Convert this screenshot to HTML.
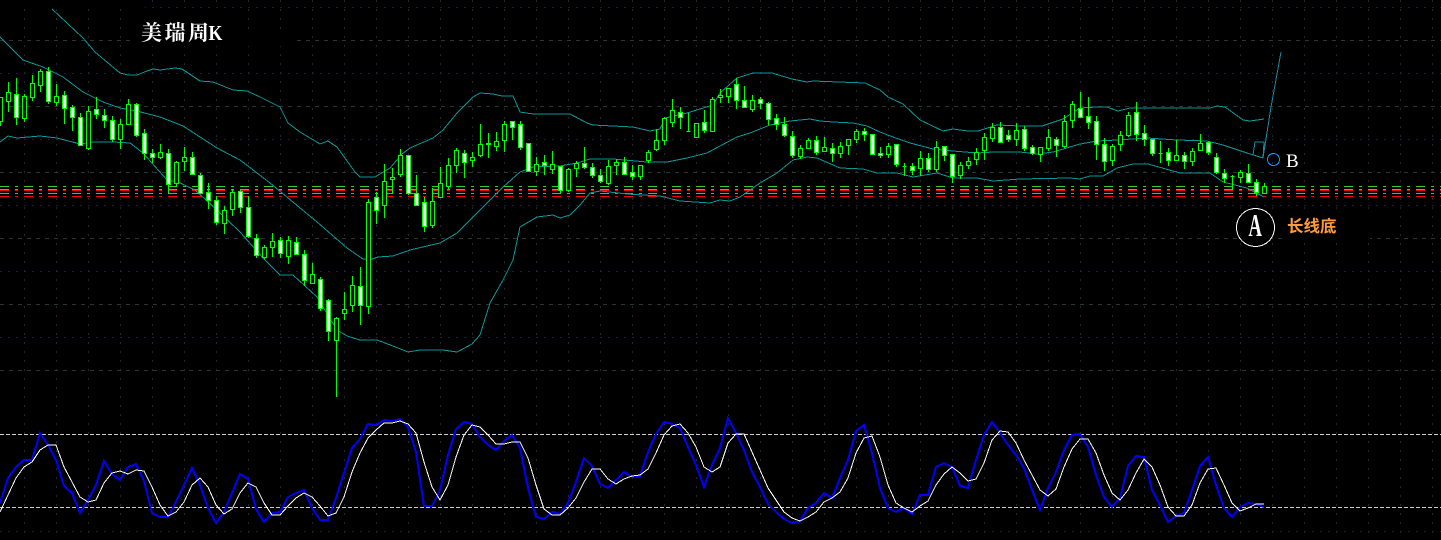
<!DOCTYPE html>
<html><head><meta charset="utf-8"><style>html,body{margin:0;padding:0;background:#000;width:1441px;height:540px;overflow:hidden}svg{display:block}</style></head><body>
<svg width="1441" height="540" viewBox="0 0 1441 540" xmlns="http://www.w3.org/2000/svg">
<rect width="1441" height="540" fill="#000"/>
<g shape-rendering="crispEdges" fill="none">
<path stroke="#1b2a33" stroke-dasharray="2 7" d="M24.5 0V540M56.5 0V540M88.5 0V540M120.5 0V540M152.5 0V540M184.5 0V540M216.5 0V540M248.5 0V540M280.5 0V540M312.5 0V540M344.5 0V540M376.5 0V540M408.5 0V540M440.5 0V540M472.5 0V540M504.5 0V540M536.5 0V540M568.5 0V540M600.5 0V540M632.5 0V540M664.5 0V540M696.5 0V540M728.5 0V540M760.5 0V540M792.5 0V540M824.5 0V540M856.5 0V540M888.5 0V540M920.5 0V540M952.5 0V540M984.5 0V540M1016.5 0V540M1048.5 0V540M1080.5 0V540M1112.5 0V540M1144.5 0V540M1176.5 0V540M1208.5 0V540M1240.5 0V540M1272.5 0V540M1304.5 0V540M1336.5 0V540M1368.5 0V540M1400.5 0V540M1432.5 0V540"/>
<path stroke="#2c3434" stroke-dasharray="4 5" d="M0 40.5H1441M0 106.5H1441M0 172.5H1441M0 238.5H1441M0 304.5H1441M0 370.5H1441"/>
<path stroke="#1c1f3c" stroke-dasharray="2 6" d="M0 7.5H1441M0 73.5H1441M0 139.5H1441M0 205.5H1441M0 271.5H1441M0 337.5H1441M0 531.5H1441"/>
<rect x="0" y="0" width="145" height="9" fill="#000"/>
<rect x="133" y="9" width="115" height="37" fill="#000"/>
<rect x="133" y="35" width="162" height="11" fill="#000"/>
<rect x="1285" y="214" width="85" height="27" fill="#000"/>
<path stroke="#32cd32" stroke-dasharray="9 6 3 6" d="M0 186.5H1441M0 189.5H1441M0 193.5H1441"/>
<path stroke="#ff0000" stroke-dasharray="9 6 3 6" d="M0 190.5H1441M0 196.5H1441"/>
<path stroke="#ccc" stroke-dasharray="4 2" d="M0 434.5H1441M0 507.5H1441"/>
<g stroke="#089898">
<polyline points="52,9 83,38 95,52 120,73 128,75 137,75 147,71 153,69 160,70 175,68 182,69 200,81 213,82 233,90 247,91 260,97 280,107 288,123 300,132 320,144 328,141 337,147 355,172 360,177 375,177 390,168 402,154 410,148 433,138 443,130 457,113 473,97 480,93 493,94 502,96 513,96 520,112 533,114 547,114 570,114 587,123 593,125 613,126 633,127 650,131 660,129 665,118 687,113 713,105 720,93 737,78 753,73 772,73 792,79 807,82 813,81 865,83 880,90 888,97 903,104 920,120 943,131 953,129 968,131 978,131 997,125 1020,126 1042,126 1063,119 1080,108 1097,107 1107,107 1118,111 1130,108 1210,108 1217,106 1225,107 1243,120 1250,121 1264,119"/>
<polyline points="0,37 23,60 43,67 63,77 83,92 103,102 120,108 137,111 160,117 183,126 200,137 217,148 240,160 257,173 270,183 317,222 347,248 363,259 372,259 378,257 393,256 410,250 427,246 440,243 457,233 473,217 503,187 520,172 533,167 560,166 577,163 590,159 613,159 647,162 667,162 687,158 707,153 720,146 737,137 750,133 770,125 790,121 810,119 820,121 833,122 853,123 867,126 880,132 893,137 910,143 933,149 953,151 977,153 993,152 1020,152 1037,154 1053,152 1070,147 1080,144 1097,141 1117,140 1147,138 1177,140 1207,141 1223,145 1247,153 1263,158"/>
<polyline points="0,142 8,136 17,138 40,136 57,138 80,144 93,142 113,142 130,143 143,153 167,180 178,182 195,190 217,210 240,232 263,258 280,275 293,275 317,297 337,330 347,336 360,340 377,340 393,346 408,352 420,350 443,350 457,352 472,344 480,335 490,303 503,280 513,260 520,227 537,217 553,215 560,218 570,215 580,205 590,193 600,191 627,194 660,196 680,201 710,203 720,200 730,201 740,197 760,183 777,173 793,160 807,157 817,158 840,168 863,169 877,173 897,173 913,177 937,173 953,178 977,178 993,181 1020,179 1070,178 1080,179 1090,176 1103,176 1117,168 1133,164 1148,164 1180,173 1197,173 1210,173 1223,182 1247,188 1264,197"/>
</g>
<polyline stroke="#1a8aa0" points="1253,155 1255,142 1264,142 1263,158 1271,107 1281,52"/>
<path stroke="#00ff00" d="M0.5 97V126M8.5 82V112M16.5 78V125M24.5 94V122M32.5 75V101M40.5 69V92M48.5 67V104M56.5 84V106M64.5 91V124M72.5 105V131M80.5 113V146M88.5 106V150M96.5 97V119M104.5 109V128M112.5 116V142M120.5 119V149M128.5 99V125M136.5 103V137M144.5 129V160M152.5 149V163M160.5 144V159M168.5 149V194M176.5 161V187M184.5 147V171M192.5 152V175M200.5 173V194M208.5 183V209M216.5 196V225M224.5 206V234M232.5 189V216M240.5 189V213M248.5 196V238M256.5 234V258M264.5 245V259M272.5 233V257M280.5 237V258M288.5 236V264M296.5 237V255M304.5 250V286M312.5 263V283M320.5 277V311M328.5 299V341M336.5 317V397M344.5 292V320M352.5 276V312M360.5 267V325M368.5 199V314M376.5 192V224M384.5 164V218M392.5 168V194M400.5 149V177M408.5 155V195M416.5 175V205M424.5 197V232M432.5 188V228M440.5 167V197M448.5 158V189M456.5 148V173M464.5 150V178M472.5 152V167M480.5 124V157M488.5 133V158M496.5 132V151M504.5 121V152M512.5 121V140M520.5 121V150M528.5 143V171M536.5 157V176M544.5 155V175M552.5 151V174M560.5 166V193M568.5 168V192M576.5 161V177M584.5 147V169M592.5 163V178M600.5 169V183M608.5 160V185M616.5 159V175M624.5 157V175M632.5 165V180M640.5 165V180M648.5 150V163M656.5 129V151M664.5 117V145M672.5 99V127M680.5 107V129M688.5 113V132M696.5 123V138M704.5 110V133M712.5 97V131M720.5 89V103M728.5 88V103M736.5 78V109M744.5 86V107M752.5 95V112M760.5 97V109M768.5 102V125M776.5 114V130M784.5 117V137M792.5 131V158M800.5 145V159M808.5 138V148M816.5 136V155M824.5 137V152M832.5 143V162M840.5 142V158M848.5 139V155M856.5 129V143M864.5 128V141M872.5 134V155M880.5 147V158M888.5 143V158M896.5 144V167M904.5 163V176M912.5 163V175M920.5 151V176M928.5 153V172M936.5 141V172M944.5 146V161M952.5 154V183M960.5 162V179M968.5 157V169M976.5 148V165M984.5 133V160M992.5 123V142M1000.5 122V143M1008.5 130V142M1016.5 123V146M1024.5 126V151M1032.5 145V155M1040.5 147V162M1048.5 129V151M1056.5 137V157M1064.5 115V148M1072.5 101V128M1080.5 92V118M1088.5 97V129M1096.5 116V160M1104.5 138V171M1112.5 144V166M1120.5 131V151M1128.5 112V137M1136.5 102V141M1144.5 125V146M1152.5 139V156M1160.5 141V163M1168.5 148V166M1176.5 140V160M1184.5 152V169M1192.5 148V166M1200.5 134V150M1208.5 141V155M1216.5 153V174M1224.5 169V183M1232.5 175V190M1240.5 170V183M1248.5 164V183M1256.5 179V196M1264.5 183V194"/>
<path stroke="#00ff00" fill="#000" d="M-1.5 97.5h4V121.5h-4zM6.5 92.5h4V101.5h-4zM22.5 96.5h4V118.5h-4zM30.5 83.5h4V97.5h-4zM38.5 71.5h4V85.5h-4zM54.5 96.5h4V102.5h-4zM86.5 111.5h4V148.5h-4zM118.5 124.5h4V139.5h-4zM126.5 104.5h4V124.5h-4zM158.5 152.5h4V157.5h-4zM174.5 162.5h4V183.5h-4zM182.5 157.5h4V161.5h-4zM222.5 210.5h4V223.5h-4zM230.5 192.5h4V209.5h-4zM262.5 247.5h4V257.5h-4zM270.5 241.5h4V247.5h-4zM286.5 240.5h4V256.5h-4zM310.5 274.5h4V283.5h-4zM334.5 318.5h4V340.5h-4zM342.5 309.5h4V313.5h-4zM350.5 285.5h4V305.5h-4zM366.5 202.5h4V306.5h-4zM382.5 181.5h4V205.5h-4zM390.5 177.5h4V179.5h-4zM398.5 155.5h4V174.5h-4zM430.5 201.5h4V225.5h-4zM438.5 183.5h4V197.5h-4zM446.5 165.5h4V186.5h-4zM454.5 150.5h4V165.5h-4zM470.5 157.5h4V160.5h-4zM478.5 144.5h4V155.5h-4zM486.5 143.5h4V144.5h-4zM494.5 141.5h4V146.5h-4zM502.5 124.5h4V140.5h-4zM534.5 164.5h4V171.5h-4zM550.5 164.5h4V169.5h-4zM566.5 169.5h4V190.5h-4zM574.5 163.5h4V168.5h-4zM606.5 166.5h4V183.5h-4zM614.5 162.5h4V165.5h-4zM638.5 165.5h4V176.5h-4zM646.5 152.5h4V160.5h-4zM654.5 140.5h4V149.5h-4zM662.5 118.5h4V140.5h-4zM670.5 110.5h4V122.5h-4zM686.5 131.5h4M694.5 123.5h4V137.5h-4zM710.5 99.5h4V131.5h-4zM718.5 95.5h4V97.5h-4zM726.5 88.5h4V96.5h-4zM750.5 100.5h4V109.5h-4zM798.5 148.5h4V156.5h-4zM806.5 140.5h4V148.5h-4zM822.5 147.5h4V151.5h-4zM838.5 146.5h4V153.5h-4zM846.5 139.5h4V145.5h-4zM854.5 131.5h4V139.5h-4zM886.5 146.5h4V154.5h-4zM902.5 166.5h4M918.5 158.5h4V168.5h-4zM934.5 147.5h4V169.5h-4zM958.5 165.5h4V175.5h-4zM966.5 161.5h4V165.5h-4zM974.5 152.5h4V159.5h-4zM982.5 137.5h4V150.5h-4zM990.5 127.5h4V138.5h-4zM1014.5 130.5h4V139.5h-4zM1038.5 147.5h4V154.5h-4zM1046.5 137.5h4V148.5h-4zM1062.5 121.5h4V146.5h-4zM1070.5 104.5h4V120.5h-4zM1110.5 146.5h4V160.5h-4zM1118.5 135.5h4V144.5h-4zM1126.5 115.5h4V135.5h-4zM1158.5 153.5h4M1174.5 155.5h4V160.5h-4zM1190.5 151.5h4V161.5h-4zM1198.5 143.5h4V150.5h-4zM1230.5 176.5h4M1238.5 172.5h4V177.5h-4zM1262.5 186.5h4V193.5h-4z"/>
<path stroke="#00ff00" fill="#fff" d="M14.5 94.5h4V117.5h-4zM46.5 71.5h4V101.5h-4zM62.5 95.5h4V108.5h-4zM70.5 107.5h4V117.5h-4zM78.5 117.5h4V145.5h-4zM94.5 109.5h4V114.5h-4zM102.5 115.5h4V120.5h-4zM110.5 120.5h4V139.5h-4zM134.5 104.5h4V135.5h-4zM142.5 133.5h4V153.5h-4zM150.5 153.5h4V157.5h-4zM166.5 153.5h4V184.5h-4zM190.5 157.5h4V174.5h-4zM198.5 175.5h4V193.5h-4zM206.5 192.5h4V200.5h-4zM214.5 200.5h4V222.5h-4zM238.5 191.5h4V207.5h-4zM246.5 207.5h4V236.5h-4zM254.5 238.5h4V255.5h-4zM278.5 240.5h4V253.5h-4zM294.5 242.5h4V254.5h-4zM302.5 254.5h4V280.5h-4zM318.5 279.5h4V308.5h-4zM326.5 300.5h4V331.5h-4zM358.5 286.5h4V305.5h-4zM374.5 197.5h4V210.5h-4zM406.5 155.5h4V193.5h-4zM414.5 193.5h4V205.5h-4zM422.5 202.5h4V226.5h-4zM462.5 153.5h4V162.5h-4zM510.5 121.5h4V127.5h-4zM518.5 124.5h4V147.5h-4zM526.5 143.5h4V171.5h-4zM542.5 162.5h4V165.5h-4zM558.5 166.5h4V190.5h-4zM582.5 163.5h4V167.5h-4zM590.5 167.5h4V175.5h-4zM598.5 175.5h4V181.5h-4zM622.5 162.5h4V174.5h-4zM630.5 172.5h4V176.5h-4zM678.5 112.5h4V117.5h-4zM702.5 122.5h4V130.5h-4zM734.5 84.5h4V100.5h-4zM742.5 100.5h4V107.5h-4zM758.5 99.5h4V103.5h-4zM766.5 103.5h4V119.5h-4zM774.5 118.5h4V124.5h-4zM782.5 124.5h4V135.5h-4zM790.5 136.5h4V155.5h-4zM814.5 140.5h4V152.5h-4zM830.5 148.5h4V153.5h-4zM862.5 131.5h4V134.5h-4zM870.5 134.5h4V154.5h-4zM878.5 153.5h4V155.5h-4zM894.5 144.5h4V164.5h-4zM910.5 166.5h4V170.5h-4zM926.5 158.5h4V169.5h-4zM942.5 146.5h4V155.5h-4zM950.5 154.5h4V176.5h-4zM998.5 127.5h4V142.5h-4zM1006.5 135.5h4V139.5h-4zM1022.5 129.5h4V148.5h-4zM1030.5 147.5h4V153.5h-4zM1054.5 139.5h4V145.5h-4zM1078.5 108.5h4V117.5h-4zM1086.5 116.5h4V122.5h-4zM1094.5 121.5h4V144.5h-4zM1102.5 144.5h4V161.5h-4zM1134.5 112.5h4V134.5h-4zM1142.5 133.5h4V139.5h-4zM1150.5 139.5h4V153.5h-4zM1166.5 152.5h4V160.5h-4zM1182.5 155.5h4V161.5h-4zM1206.5 142.5h4V152.5h-4zM1214.5 157.5h4V172.5h-4zM1222.5 173.5h4V178.5h-4zM1246.5 173.5h4V182.5h-4zM1254.5 182.5h4V192.5h-4z"/>
<polyline stroke="#0000ff" stroke-width="2" points="0,503 8,478 16,467 24,460 32,460 40,433 48,445 56,460 64,486 72,493 80,513 88,500 96,485 104,461 112,474 120,480 128,467 136,464 144,481 152,513 160,517 168,517 176,502 184,485 192,468 200,485 208,508 216,523 224,512 232,493 240,474 248,479 256,509 264,522 272,513 280,512 288,497 296,493 304,490 312,508 320,520 328,520 336,498 344,473 352,448 360,439 368,424 376,425 384,420 392,421 400,419 408,427 416,452 424,506 432,506 440,490 448,455 456,429 464,422 472,424 480,437 488,445 496,450 504,441 512,435 520,448 528,488 536,517 544,519 552,512 560,514 568,503 576,482 584,458 592,466 600,484 608,488 616,480 624,472 632,477 640,476 648,452 656,434 664,422 672,424 680,428 688,447 696,465 704,487 712,465 720,448 728,418 736,433 744,450 752,472 760,487 768,504 776,512 784,519 792,523 800,521 808,508 816,503 824,493 832,498 840,478 848,460 856,431 864,425 872,453 880,488 888,508 896,512 904,508 912,514 920,495 928,495 936,467 944,463 952,467 960,486 968,488 976,460 984,435 992,422 1000,433 1008,445 1016,455 1024,468 1032,490 1040,510 1048,488 1056,472 1064,450 1072,435 1080,434 1088,447 1096,475 1104,497 1112,507 1120,498 1128,466 1136,456 1144,457 1152,490 1160,505 1168,522 1176,516 1184,513 1192,490 1200,466 1208,457 1216,485 1224,508 1232,517 1240,507 1248,503 1256,504 1264,507"/>
<polyline stroke="#ffffff" points="0,512 8,495 16,478 24,467 32,462 40,450 48,445 56,445 64,467 72,482 80,497 88,502 96,500 104,483 112,473 120,471 128,474 136,470 144,471 152,487 160,505 168,516 176,512 184,502 192,485 200,478 208,487 216,505 224,514 232,509 240,493 248,483 256,487 264,503 272,515 280,515 288,506 296,498 304,493 312,497 320,506 328,516 336,513 344,497 352,472 360,453 368,438 376,430 384,423 392,423 400,421 408,424 416,433 424,462 432,487 440,500 448,485 456,457 464,435 472,425 480,427 488,435 496,444 504,444 512,442 520,442 528,458 536,485 544,509 552,515 560,515 568,508 576,498 584,482 592,469 600,469 608,479 616,484 624,479 632,476 640,475 648,469 656,453 664,435 672,426 680,424 688,433 696,447 704,467 712,472 720,467 728,443 736,434 744,434 752,452 760,470 768,488 776,500 784,512 792,518 800,521 808,517 816,512 824,502 832,498 840,492 848,478 856,453 864,438 872,436 880,457 888,485 896,503 904,508 912,512 920,506 928,501 936,485 944,474 952,467 960,473 968,481 976,479 984,463 992,440 1000,431 1008,432 1016,443 1024,460 1032,475 1040,490 1048,496 1056,489 1064,467 1072,449 1080,439 1088,439 1096,453 1104,475 1112,493 1120,500 1128,490 1136,473 1144,459 1152,467 1160,485 1168,507 1176,516 1184,516 1192,505 1200,483 1208,469 1216,468 1224,485 1232,503 1240,511 1248,508 1256,504 1264,504"/>
<circle cx="1273.5" cy="159.5" r="6" stroke="#1e90ff"/>
<circle cx="1255.5" cy="227.5" r="19" stroke="#ffffff" fill="#000"/>
</g>
<text x="141" y="40" fill="#fff" font-family="'Liberation Serif','Noto Serif CJK SC',serif" font-weight="700" font-size="21" letter-spacing="2.5">美瑞周</text>
<text transform="translate(208.5,40) scale(.85,1)" fill="#fff" font-family="'Liberation Serif',serif" font-size="21" font-weight="700">K</text>
<text x="1286" y="167" fill="#fff" font-family="'Liberation Serif',serif" font-size="19">B</text>
<text transform="translate(1248.5,236) scale(.58,1)" fill="#fff" font-family="'Liberation Serif',serif" font-weight="700" font-size="32">A</text>
<text x="1287" y="232" fill="#ff9a3c" font-family="'Liberation Sans','Noto Sans CJK SC',sans-serif" font-weight="700" font-size="16.5">长线底</text>
</svg>
</body></html>
